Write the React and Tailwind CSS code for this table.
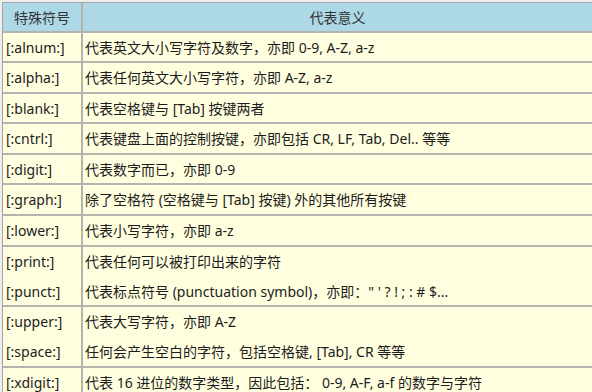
import React from "react";

const rows = [
  { h: "h-[30px]", sym: ["[:alnum:]"], desc: ["代表英文大小写字符及数字，亦即 0-9, A-Z, a-z"] },
  { h: "h-[31px]", sym: ["[:alpha:]"], desc: ["代表任何英文大小写字符，亦即 A-Z, a-z"] },
  { h: "h-[30px]", sym: ["[:blank:]"], desc: ["代表空格键与 [Tab] 按键两者"] },
  { h: "h-[31px]", sym: ["[:cntrl:]"], desc: ["代表键盘上面的控制按键，亦即包括 CR, LF, Tab, Del.. 等等"] },
  { h: "h-[30px]", sym: ["[:digit:]"], desc: ["代表数字而已，亦即 0-9"] },
  { h: "h-[31px]", sym: ["[:graph:]"], desc: ["除了空格符 (空格键与 [Tab] 按键) 外的其他所有按键"] },
  { h: "h-[31px]", sym: ["[:lower:]"], desc: ["代表小写字符，亦即 a-z"] },
  {
    h: "h-[60px]",
    sym: ["[:print:]", "[:punct:]"],
    desc: ["代表任何可以被打印出来的字符", "代表标点符号 (punctuation symbol)，亦即：\" ' ? ! ; : # $..."],
  },
  {
    h: "h-[61px]",
    sym: ["[:upper:]", "[:space:]"],
    desc: ["代表大写字符，亦即 A-Z", "任何会产生空白的字符，包括空格键, [Tab], CR 等等"],
  },
  { h: "h-[31px]", sym: ["[:xdigit:]"], desc: ["代表 16 进位的数字类型，因此包括： 0-9, A-F, a-f 的数字与字符"] },
];

export default function App() {
  return (
    <div
      className="w-[592px] h-[392px] overflow-hidden bg-[#eeeeee] pt-[2px] pl-[2px]"
      style={{ fontFamily: '"Noto Sans", "Noto Sans CJK SC", sans-serif' }}
    >
      <div className="border-t border-l border-[#a4a4a4] w-[600px]">
        <div className="grid grid-cols-[80px_1fr] h-[30px] bg-[#add8e6] border-b-2 border-[#b4b4ae] text-[14px] text-[#333]">
          <div className="flex items-center justify-center border-r-2 border-[#b4b4ae]">特殊符号</div>
          <div className="flex items-center justify-center pr-[10px]">代表意义</div>
        </div>
        {rows.map((r) => (
          <div
            key={r.sym[0]}
            className={`grid grid-cols-[80px_1fr] ${r.h} bg-[#ffffe0] border-b-2 border-[#b4b4ae] text-[14px] text-[#1c1c1c]`}
          >
            <div className="flex flex-col justify-center border-r-2 border-[#b4b4ae] pl-[3px]">
              {r.sym.map((s) => (
                <div key={s} className="leading-[30px] whitespace-nowrap">{s}</div>
              ))}
            </div>
            <div className="flex flex-col justify-center pl-[2px]">
              {r.desc.map((d) => (
                <div key={d} className="leading-[30px] whitespace-nowrap">{d}</div>
              ))}
            </div>
          </div>
        ))}
      </div>
    </div>
  );
}
